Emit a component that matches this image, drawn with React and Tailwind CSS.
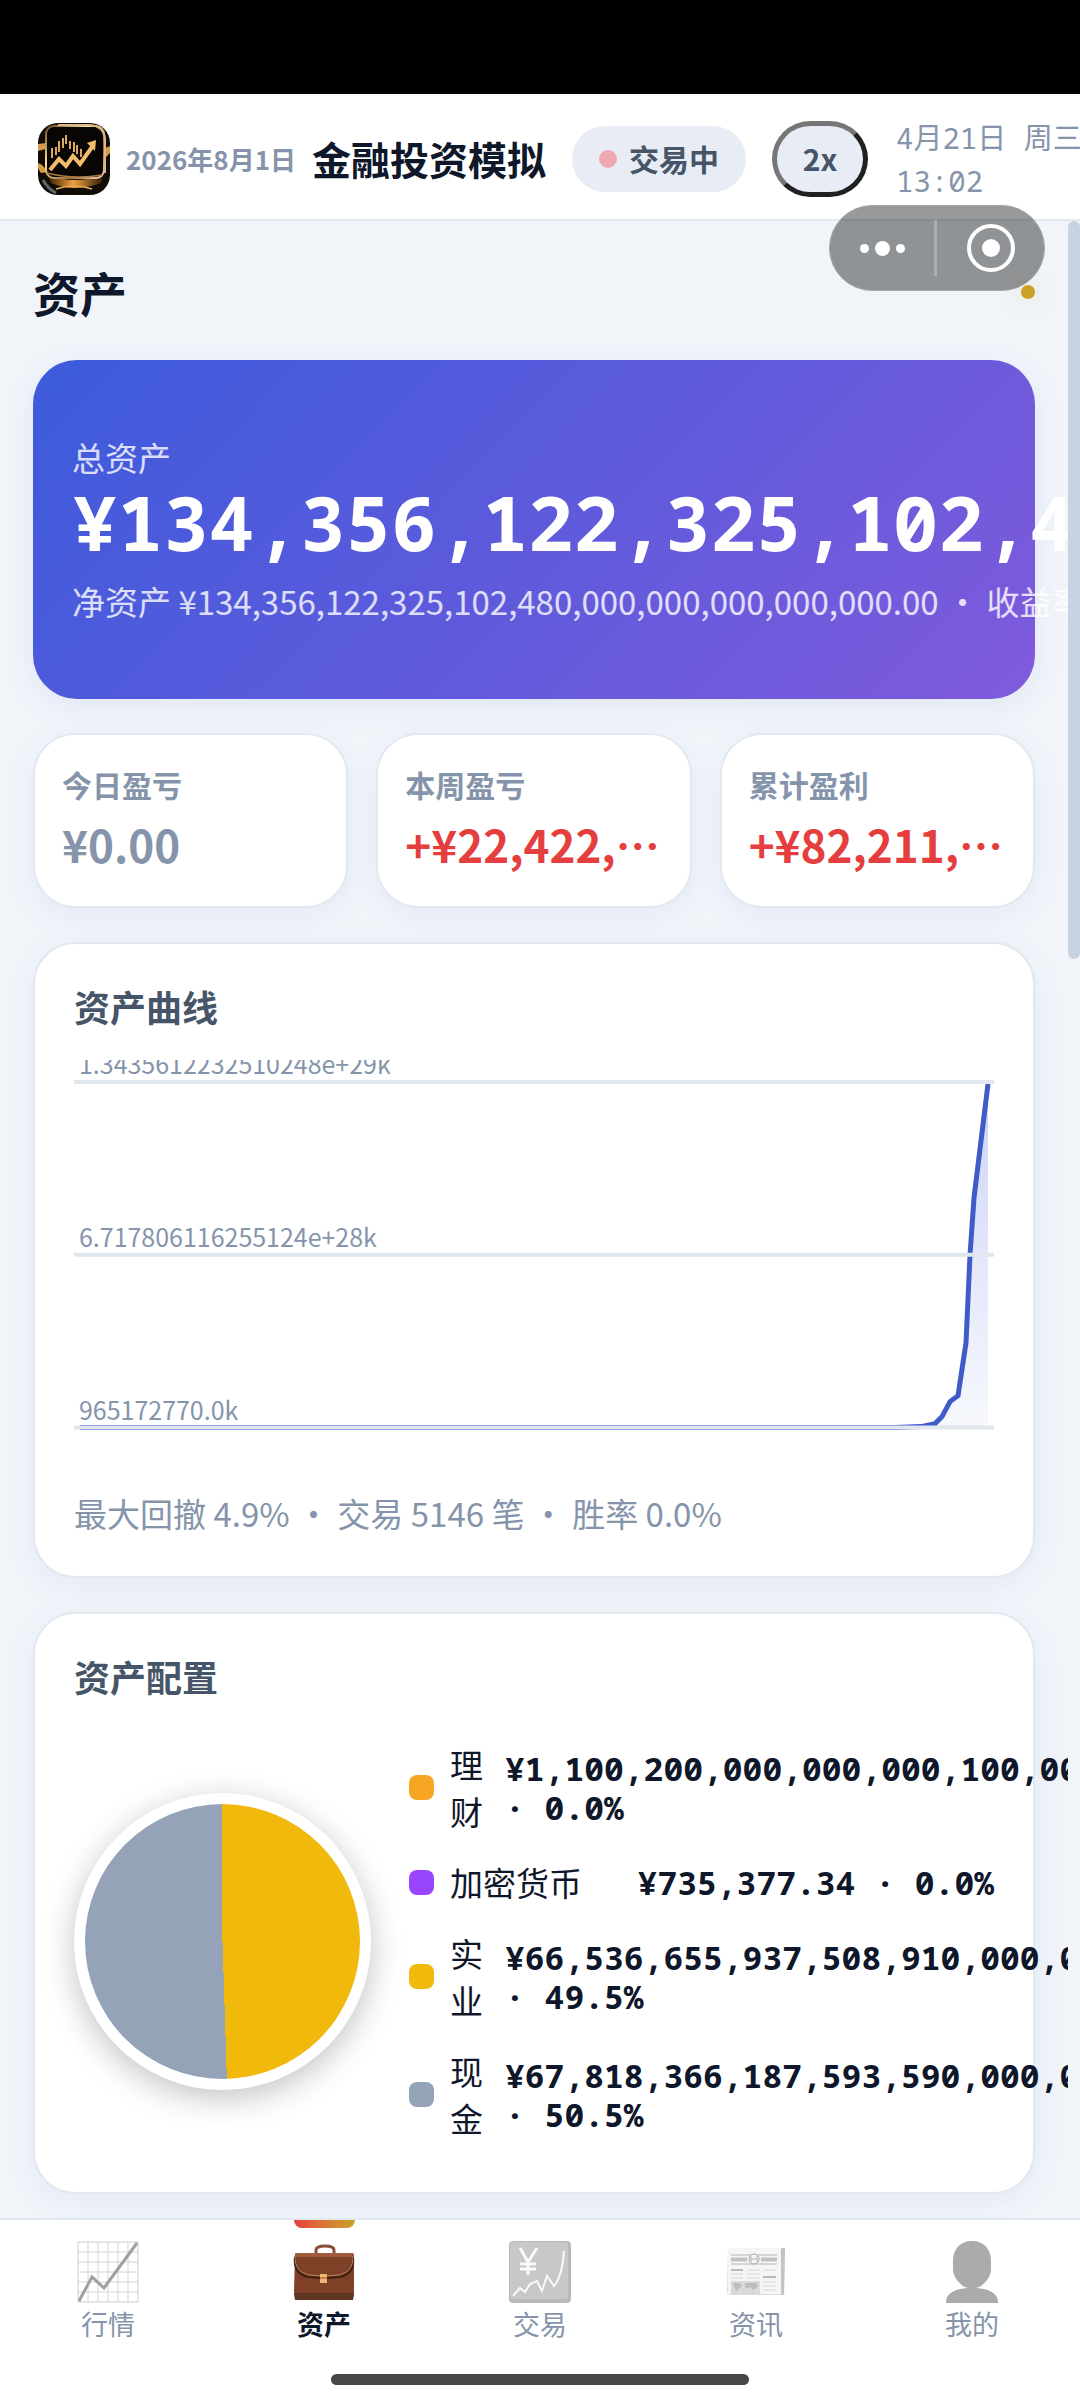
import React from 'react';

const STATS = [
	{ label: '今日盈亏', value: '¥0.00', tone: 'text-[#8594aa]' },
	{ label: '本周盈亏', value: '+¥22,422,…', tone: 'text-[#e53e3e]' },
	{ label: '累计盈利', value: '+¥82,211,…', tone: 'text-[#e53e3e]' },
];

const ALLOCATION = [
	{ name: '理财', amount: '¥1,100,200,000,000,000,100,000,000.00', percent: '0.0%', swatch: 'bg-[#f6a623]' },
	{ name: '加密货币', amount: '¥735,377.34', percent: '0.0%', swatch: 'bg-[#9945ff]' },
	{ name: '实业', amount: '¥66,536,655,937,508,910,000,000,000,000,000.00', percent: '49.5%', swatch: 'bg-[#f0b90b]' },
	{ name: '现金', amount: '¥67,818,366,187,593,590,000,000,000,000,000.00', percent: '50.5%', swatch: 'bg-[#94a3b8]' },
];

const GRID_LINES = [
	{ y: 22, label: '1.3435612232510248e+29k' },
	{ y: 195, label: '6.717806116255124e+28k' },
	{ y: 368, label: '965172770.0k' },
];

const CURVE = '6,368 790,368 822,368 848,367 862,364 869,357 877,342 885,336 893,283 897,195 901,138 915,24';

const Logo = () => (
	<svg viewBox="0 0 72 72" className="size-[72px] shrink-0 rounded-[20px]" aria-hidden="true">
		<defs>
			<linearGradient id="gold" x1="0" y1="0" x2="1" y2="1">
				<stop offset="0" stopColor="#6d4a1c" />
				<stop offset="0.35" stopColor="#ffe2a0" />
				<stop offset="0.7" stopColor="#9a6b38" />
				<stop offset="1" stopColor="#f3dcc0" />
			</linearGradient>
			<linearGradient id="glow" x1="0" y1="0" x2="1" y2="0">
				<stop offset="0" stopColor="#3a1d05" />
				<stop offset="0.45" stopColor="#f0a13c" />
				<stop offset="1" stopColor="#2a1505" />
			</linearGradient>
		</defs>
		<rect width="72" height="72" fill="#120c06" />
		<path d="M0 21 L8 20 V26 L0 28 Z M0 40 Q6 42 9 49 L3 50 Q0 46 0 44 Z M65 26 L72 23 V30 L66 36 Z" fill="#d79b45" />
		<path d="M10 52 Q36 62 66 52 L63 60 Q36 70 13 60 Z" fill="url(#glow)" />
		<path d="M18 66 Q36 60 54 66" stroke="#e3a85a" strokeWidth="1.5" fill="none" />
		<path d="M5 57 Q10 66 18 70" stroke="#5b666d" strokeWidth="3" fill="none" />
		<rect x="8" y="3" width="58" height="52" rx="8" fill="#080604" stroke="url(#gold)" strokeWidth="2" />
		<path d="M20 2 H52 Q65 3 67 15 V50" stroke="#d9b98c" strokeWidth="2" fill="none" />
		<path d="M9 50 Q36 57 64 52" stroke="#a97b42" strokeWidth="1.5" fill="none" />
		<path d="M14 25v10M18 24v8M21 18v11M25 15v10M28 12v9M32 18v8M36 19v10M39 22v9M43 26v8" stroke="#dda75e" strokeWidth="2" />
		<path d="M12 47 L21 36 L28 43 L35 33 L42 41 L54 24" stroke="#f4bd6e" strokeWidth="4" fill="none" />
		<path d="M49 20 L58 17 L57 28 Z" fill="#f4bd6e" />
	</svg>
);

const ChartIcon = () => (
	<svg viewBox="0 0 62 62" className="size-[62px]" aria-hidden="true">
		<rect x="1" y="1" width="60" height="60" fill="#fff" stroke="#cfcfcf" strokeWidth="1" />
		<path d="M11 1v60M21 1v60M31 1v60M41 1v60M51 1v60M1 11h60M1 21h60M1 31h60M1 41h60M1 51h60" stroke="#d4d4d4" strokeWidth="1" />
		<path d="M2 60 L15 36 L27 47 L60 2" stroke="#a0a0a0" strokeWidth="3" fill="none" />
	</svg>
);

const BriefcaseIcon = () => (
	<svg viewBox="0 0 62 62" className="size-[62px]" aria-hidden="true">
		<path d="M23 14 V9 Q23 5 32 5 Q41 5 41 9 V14" stroke="#8a4f38" strokeWidth="3" fill="none" />
		<path d="M3 12 H59 Q61 12 61 15 V52 L60 58 Q60 59 58 59 H4 Q2 59 2 57 L1 50 L2 14 Q2 12 3 12 Z" fill="#7e4026" />
		<path d="M3 12 H59 L61 16 H1 Z" fill="#a05c3d" />
		<path d="M1 52 H61 L60 59 H2 Z" fill="#5d341f" />
		<path d="M2 16 Q0 33 16 36 Q31 38 46 36 Q62 33 60 16" stroke="#3f1e10" strokeWidth="2" fill="none" />
		<path d="M2 15 Q1 31 16 34 Q31 36 46 34 Q61 31 60 15" stroke="#b47f58" strokeWidth="1" fill="none" />
		<path d="M27 33h7v9h-7z" fill="#efb473" />
		<path d="M27 37h7" stroke="#b87540" strokeWidth="1.5" />
	</svg>
);

const TradeIcon = () => (
	<svg viewBox="0 0 62 62" className="size-[62px]" aria-hidden="true">
		<rect width="62" height="62" rx="4" fill="#b9b9b9" />
		<rect x="1" y="1" width="58" height="57" rx="3" fill="#c8c8c8" />
		<path d="M11 7 L19 21 L28 7 M19 21 V34 M11 23h16M11 28h16" stroke="#fafafa" strokeWidth="3" fill="none" />
		<path d="M4 55 L11 47 L16 51 L21 43 L28 40 L33 50 L38 35 L45 45 Q53 36 55 10" stroke="#fafafa" strokeWidth="2" fill="none" />
	</svg>
);

const NewsIcon = () => (
	<svg viewBox="0 0 62 62" className="size-[62px]" aria-hidden="true">
		<path d="M3 7 H60 L59 54 H5 Q2 54 2 51 Z" fill="#dedede" />
		<path d="M56 7 H60 L59 54 H56 Z" fill="#c4c4c4" />
		<path d="M3 7 H56 V53 H4 Q2 53 3 50 Z" fill="#f5f5f5" />
		<path d="M6 14h46M6 23h46" stroke="#b7b7b7" strokeWidth="1" />
		<path d="M6 18.500h16M36 18.500h16" stroke="#c2c2c2" strokeWidth="4" />
		<circle cx="29" cy="18" r="5" fill="#f5f5f5" stroke="#a9a9a9" />
		<path d="M26 15v6M32 15v6M26 18h6" stroke="#b5b5b5" />
		<path d="M6 29h12M38 36h13" stroke="#b9b9b9" strokeWidth="2" />
		<path d="M22 29h13M38 29h13M6 33h12M22 33h13M6 37h12M22 37h13M38 41h13M38 45h13M38 49h13" stroke="#d6d6d6" strokeWidth="1" />
		<path d="M6 40h29v14h-29z" fill="#dadada" />
		<path d="M8 42h7l2 3-4 3-1 3-3-5zM20 42h12l1 4-5 3-3-3-4 2z" fill="#bdbdbd" />
	</svg>
);

const PersonIcon = () => (
	<svg viewBox="0 0 62 62" className="size-[62px]" aria-hidden="true">
		<path d="M31 0 C43 0 50 8 50 20 V29 C50 36 42 46 35 47 C48 48 57 52 57 61 V62 H5 V61 C5 52 14 48 27 47 C20 46 12 36 12 29 V20 C12 8 19 0 31 0 Z" fill="#ababab" />
	</svg>
);

const TABS = [
	{ label: '行情', Icon: ChartIcon },
	{ label: '资产', Icon: BriefcaseIcon, active: true },
	{ label: '交易', Icon: TradeIcon },
	{ label: '资讯', Icon: NewsIcon },
	{ label: '我的', Icon: PersonIcon },
];

// White panel shared by the chart and the allocation sections
const Card = ({ title, children }) => (
	<section className="rounded-[42px] border-2 border-[#e2e8f0] bg-white px-[39px] pt-[35px] shadow-[0_8px_32px_rgba(60,90,190,0.07)]">
		<h2 className="text-[36px] leading-[54px] font-bold text-[#475569]">{title}</h2>
		{children}
	</section>
);

const App = () => {
	return (
		<div
			lang="zh-CN"
			className="flex min-h-screen flex-col overflow-hidden bg-[#f1f5fa] font-['Noto_Sans_CJK_SC',sans-serif] text-[#0f172a]"
		>
			<div className="h-[94px] bg-black" />

			<header className="relative flex h-[127px] items-center border-b-2 border-[#e2e8f0] bg-white pt-1 pl-[38px] whitespace-nowrap">
				<Logo />
				<span className="ml-4 text-[26px] font-bold text-[#8594aa]">2026年8月1日</span>
				<h1 className="ml-4 text-[39px] font-bold">金融投资模拟</h1>
				<div className="ml-[26px] flex h-[66px] shrink-0 items-center gap-3 rounded-full bg-[#e8edf5] px-[27px] text-[30px] font-bold text-[#475569]">
					<span className="size-[18px] rounded-full bg-[#eea9ae]" />
					交易中
				</div>
				<button
					type="button"
					className="ml-[26px] h-[76px] w-24 shrink-0 rounded-full border-5 border-t-[#767676] border-r-[#212121] border-b-[#212121] border-l-[#767676] bg-[#e8edf5] text-[30px] font-bold text-[#475569]"
				>
					2x
				</button>
				<div className="ml-7 shrink-0 font-['Noto_Sans_Mono','DejaVu_Sans_Mono','Noto_Sans_CJK_SC',monospace] text-[29px] leading-[43px] text-[#8594aa]">
					<div>4月21日 周三</div>
					<div>13:02</div>
				</div>

				<div className="absolute top-[111px] right-[35px] z-10 flex h-[86px] w-[216px] items-center rounded-full border border-[#a5a7aa] bg-black/40 text-white">
					<button type="button" aria-label="更多" className="flex h-full w-[104px] items-center justify-center gap-[6px]">
						<span className="size-[9px] rounded-full bg-white" />
						<span className="size-[15px] rounded-full bg-white" />
						<span className="size-[9px] rounded-full bg-white" />
					</button>
					<span className="h-14 w-[3px] bg-white/25" />
					<button type="button" aria-label="关闭" className="flex h-full flex-1 items-center justify-center">
						<span className="flex size-12 items-center justify-center rounded-full border-4 border-white">
							<span className="size-[18px] rounded-full bg-white" />
						</span>
					</button>
				</div>
			</header>

			<div className="flex flex-1">
				<main className="flex min-w-0 flex-1 flex-col gap-[34px] overflow-hidden px-[33px] pt-9 pb-6">
					<div className="-mb-px flex items-center justify-between">
						<h2 className="text-[47px] leading-[70px] font-bold">资产</h2>
						<span className="size-[14px] rounded-full bg-[#c9a227] shadow-[0_0_24px_rgba(201,162,39,0.4)]" />
					</div>

					<section className="rounded-[44px] bg-[linear-gradient(135deg,#3b5bdb,#805adc)] px-[39px] pt-[72px] pb-[73px] whitespace-nowrap text-white shadow-[0_8px_32px_rgba(60,90,190,0.09)]">
						<div className="text-[33px] leading-[50px] text-white/80">总资产</div>
						<div className="font-['Noto_Sans_Mono','DejaVu_Sans_Mono',monospace] text-[76px] leading-[80px] font-bold">
							¥134,356,122,325,102,480,000,000,000,000,000.00
						</div>
						<div className="mt-[14px] text-[33px] leading-[50px] text-white/80">
							净资产 ¥134,356,122,325,102,480,000,000,000,000,000.00 ・ 收益率
						</div>
					</section>

					<section className="grid grid-cols-3 gap-7">
						{STATS.map((stat) => (
							<div
								key={stat.label}
								className="flex flex-col gap-2 rounded-[42px] border-2 border-[#e2e8f0] bg-white px-[27px] pt-[27px] pb-8 shadow-[0_8px_32px_rgba(60,90,190,0.07)]"
							>
								<div className="text-[30px] leading-[44px] font-bold text-[#8594aa]">{stat.label}</div>
								<div className={`text-[44px] leading-[60px] font-bold whitespace-nowrap ${stat.tone}`}>{stat.value}</div>
							</div>
						))}
					</section>

					<Card title="资产曲线">
						<svg viewBox="0 0 921 404" className="mt-[27px] block w-full" role="img" aria-label="资产曲线">
							<defs>
								<linearGradient id="area" x1="0" y1="0" x2="0" y2="1">
									<stop offset="0" stopColor="#3b5bdb" stopOpacity="0.26" />
									<stop offset="1" stopColor="#3b5bdb" stopOpacity="0.04" />
								</linearGradient>
							</defs>
							<polygon points={`${CURVE} 915,368`} fill="url(#area)" />
							<polyline points={CURVE} fill="none" stroke="#3f5bc8" strokeWidth="5" />
							{GRID_LINES.map((line) => (
								<g key={line.y}>
									<line x1="0" x2="921" y1={line.y} y2={line.y} stroke="#e2e6ee" strokeWidth="4" />
									<text x="5" y={line.y - 8} fontSize="25" fill="#8594aa">
										{line.label}
									</text>
								</g>
							))}
						</svg>
						<p className="mt-6 mb-[38px] text-[33px] leading-[50px] text-[#8594aa]">最大回撤 4.9% ・ 交易 5146 笔 ・ 胜率 0.0%</p>
					</Card>

					<Card title="资产配置">
						<div className="mt-[38px] mb-[50px] flex items-center gap-[38px]">
							<div className="size-[297px] shrink-0 rounded-full bg-white p-[11px] shadow-[0_8px_32px_rgba(0,0,0,0.24)]">
								<div className="size-full rounded-full bg-[conic-gradient(#f0b90b_49.5%,#94a3b8_49.5%)]" />
							</div>
							<ul className="flex min-w-0 flex-1 flex-col gap-6">
								{ALLOCATION.map((item) => (
									<li key={item.name} className="flex items-center">
										<span className={`mr-4 size-[25px] shrink-0 rounded-lg ${item.swatch}`} />
										<span className="mr-[22px] flex-1 text-[33px] leading-[47px]">{item.name}</span>
										<span className="font-['Noto_Sans_Mono','DejaVu_Sans_Mono',monospace] text-[33px] leading-[39px] font-bold">
											{item.amount} · {item.percent}
										</span>
									</li>
								))}
							</ul>
						</div>
					</Card>
				</main>
				<div className="w-3 shrink-0">
					<div className="h-[738px] rounded-full bg-[#c7d3e0]" />
				</div>
			</div>

			<nav className="border-t-2 border-[#e2e8f0] bg-white">
				<div className="grid grid-cols-5">
					{TABS.map(({ label, Icon, active }) => (
						<button key={label} type="button" className="relative flex flex-col items-center pt-[21px]">
							{active && (
								<span className="absolute top-0 h-2 w-[61px] rounded-b-lg bg-linear-to-r from-[#e53e3e] to-[#c9a227]" />
							)}
							<Icon />
							<span
								className={`mt-px text-[27px] leading-[40px] ${active ? 'font-bold text-[#0f172a]' : 'text-[#8594aa]'}`}
							>
								{label}
							</span>
						</button>
					))}
				</div>
				<div className="mx-auto mt-[30px] mb-4 h-[11px] w-[418px] rounded-full bg-[#474747]" />
			</nav>
		</div>
	);
};

export default App;
